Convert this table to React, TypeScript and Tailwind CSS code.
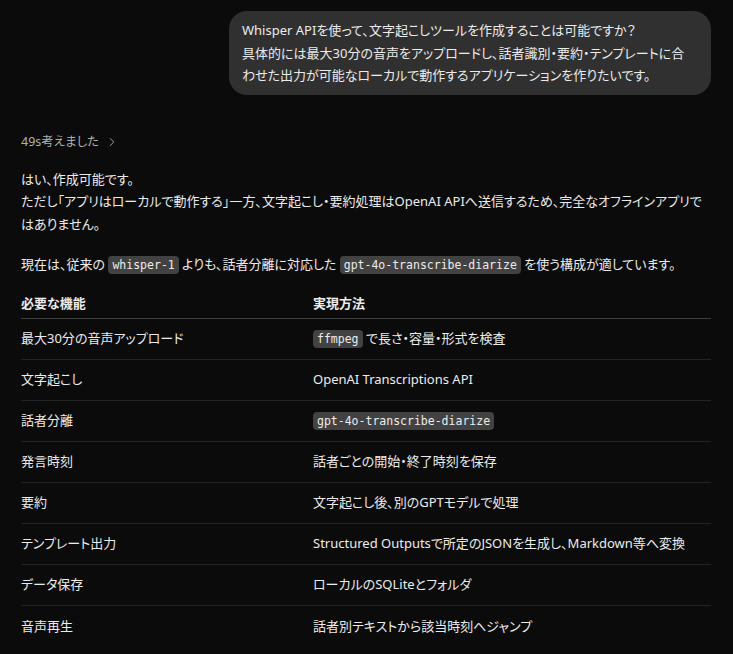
import { ChevronRight } from 'lucide-react';
import type { ReactNode } from 'react';

const rows: { feature: string; method: ReactNode }[] = [
  { feature: '最大30分の音声アップロード', method: <><Code>ffmpeg</Code> で長さ・容量・形式を検査</> },
  { feature: '文字起こし', method: 'OpenAI Transcriptions API' },
  { feature: '話者分離', method: <Code>gpt-4o-transcribe-diarize</Code> },
  { feature: '発言時刻', method: '話者ごとの開始・終了時刻を保存' },
  { feature: '要約', method: '文字起こし後、別のGPTモデルで処理' },
  { feature: 'テンプレート出力', method: 'Structured Outputsで所定のJSONを生成し、Markdown等へ変換' },
  { feature: 'データ保存', method: 'ローカルのSQLiteとフォルダ' },
  { feature: '音声再生', method: '話者別テキストから該当時刻へジャンプ' },
];

function Code({ children }: { children: ReactNode }) {
  return (
    <code className="rounded-[4px] bg-[#424242] px-[4px] py-[2px] font-['DejaVu_Sans_Mono',monospace] text-[11.5px] text-[#ececec]">
      {children}
    </code>
  );
}

export default function App() {
  return (
    <div className="min-h-[654px] whitespace-nowrap bg-[#0b0b0b] pl-[21px] pr-[22px] pt-[11px] font-['Noto_Sans','Noto_Sans_CJK_JP',sans-serif] text-[13px] leading-[22.5px] text-[#ececec] [font-feature-settings:'palt']">
      {/* User message */}
      <div className="flex justify-end">
        <div className="w-[482px] rounded-[18px] bg-[#303030] py-2 pl-[13px] pr-3">
          Whisper APIを使って、文字起こしツールを作成することは可能ですか？
          <br />
          具体的には最大30分の音声をアップロードし、話者識別・要約・テンプレートに合
          <br />
          わせた出力が可能なローカルで動作するアプリケーションを作りたいです。
        </div>
      </div>

      {/* Thinking */}
      <div className="mt-[37px] flex items-center gap-[6px] text-[12.5px] leading-[20px] text-[#b0b0b0]">
        <span>49s考えました</span>
        <ChevronRight size={14} strokeWidth={1.5} />
      </div>

      {/* Answer */}
      <p className="mt-[16px]">
        はい、作成可能です。
        <br />
        ただし「アプリはローカルで動作する」一方、文字起こし・要約処理はOpenAI APIへ送信するため、完全なオフラインアプリで
        <br />
        はありません。
      </p>
      <p className="mt-[18px]">
        現在は、従来の <Code>whisper-1</Code> よりも、話者分離に対応した <Code>gpt-4o-transcribe-diarize</Code> を使う構成が適しています。
      </p>

      {/* Table */}
      <div className="mt-[13px]">
        <div className="grid h-[29px] grid-cols-[292px_1fr] items-center border-b border-[#3d3d3d] font-bold">
          <div>必要な機能</div>
          <div>実現方法</div>
        </div>
        {rows.map((r, i) => (
          <div
            key={r.feature}
            className={`grid h-[41px] grid-cols-[292px_1fr] items-center ${i < rows.length - 1 ? 'border-b border-[#232323]' : ''}`}
          >
            <div>{r.feature}</div>
            <div>{r.method}</div>
          </div>
        ))}
      </div>
    </div>
  );
}
